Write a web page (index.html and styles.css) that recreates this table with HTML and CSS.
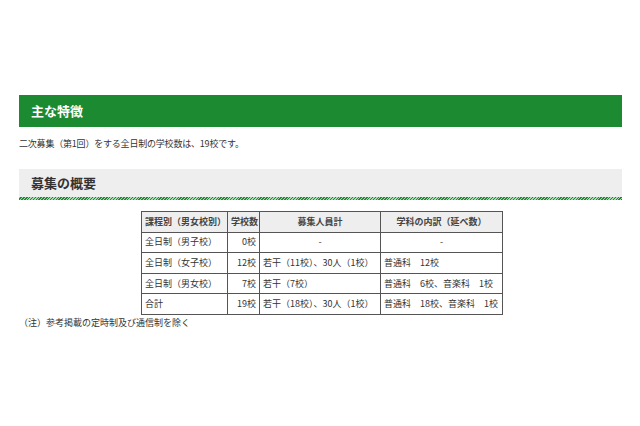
FILE: index.html
```
<!DOCTYPE html>
<html lang="ja">
<head>
<meta charset="utf-8">
<link rel="stylesheet" href="styles.css">
</head>
<body>
<div class="page">
  <h2 class="h-green">主な特徴</h2>
  <p class="lead">二次募集（第1回）をする全日制の学校数は、19校です。</p>
  <h3 class="h-gray">募集の概要</h3>
  <table class="tbl">
    <colgroup>
      <col class="c1"><col class="c2"><col class="c3"><col class="c4">
    </colgroup>
    <thead>
      <tr><th class="left">課程別（男女校別）</th><th>学校数</th><th>募集人員計</th><th>学科の内訳（延べ数）</th></tr>
    </thead>
    <tbody>
      <tr><td>全日制（男子校）</td><td class="num">0校</td><td class="center">-</td><td class="center">-</td></tr>
      <tr><td>全日制（女子校）</td><td class="num">12校</td><td>若干（11校）、30人（1校）</td><td>普通科　12校</td></tr>
      <tr><td>全日制（男女校）</td><td class="num">7校</td><td>若干（7校）</td><td>普通科　6校、音楽科　1校</td></tr>
      <tr><td>合計</td><td class="num">19校</td><td>若干（18校）、30人（1校）</td><td>普通科　18校、音楽科　1校</td></tr>
    </tbody>
  </table>
  <p class="note">（注）参考掲載の定時制及び通信制を除く</p>
</div>
</body>
</html>
```
FILE: styles.css
```
html, body {
  margin: 0;
  padding: 0;
  background: #ffffff;
}
body {
  font-family: "Noto Sans CJK JP", "Noto Sans", sans-serif;
  color: #333333;
  font-size: 9px;
}
.page {
  width: 603px;
  margin-left: 19px;
  padding-top: 95px;
}
.h-green {
  margin: 0;
  height: 32px;
  line-height: 32px;
  background: #1c8a31;
  color: #ffffff;
  font-size: 13px;
  font-weight: bold;
  padding-left: 12px;
}
.lead {
  margin: 10px 0 0 0;
  line-height: 13px;
  height: 13px;
  letter-spacing: -0.2px;
}
.h-gray {
  margin: 19px 0 0 0;
  height: 28px;
  line-height: 28px;
  background: #eeeeee;
  color: #333333;
  font-size: 13px;
  font-weight: bold;
  padding-left: 12px;
  border-bottom: 3px solid transparent;
  border-image: repeating-linear-gradient(-45deg, #1c8a31 0 1px, #a8d8b0 1px 2px) 3;
}
.tbl {
  margin: 11px 0 0 122px;
  border-collapse: collapse;
  width: 361px;
  table-layout: fixed;
}
.c1 { width: 86px; }
.c2 { width: 32px; }
.c3 { width: 121px; }
.c4 { width: 122px; }
.tbl th, .tbl td {
  border: 1px solid #555555;
  height: 20.6px;
  padding: 0 3px;
  font-size: 9px;
  line-height: 12px;
  white-space: nowrap;
  box-sizing: border-box;
}
.tbl th {
  background: #eeeeee;
  font-weight: bold;
  text-align: center;
  color: #444444;
}
.tbl th.left { text-align: left; }
.tbl td { text-align: left; }
.tbl td.num { text-align: right; }
.tbl td.center { text-align: center; }
.note {
  margin: 1px 0 0 0;
  line-height: 13px;
}
```
